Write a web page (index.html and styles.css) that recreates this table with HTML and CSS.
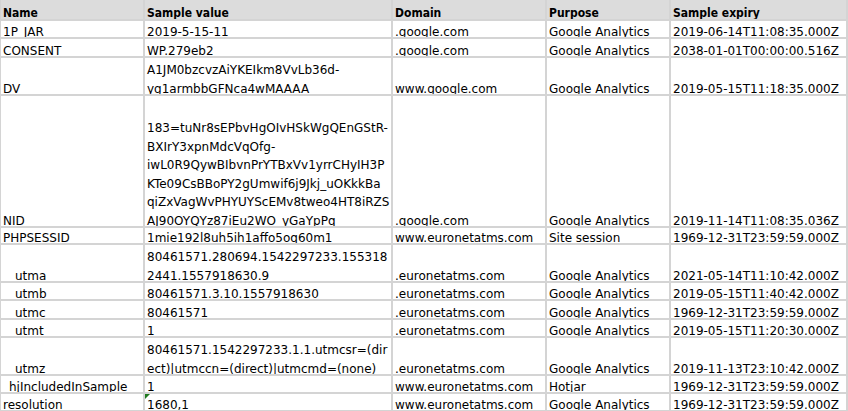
FILE: index.html
```html
<!DOCTYPE html>
<html>
<head>
<meta charset="utf-8">
<link rel="stylesheet" href="styles.css">
</head>
<body>
<div class="sheet">
  <div class="c h"><span>Name</span></div>
  <div class="c h"><span>Sample value</span></div>
  <div class="c h"><span>Domain</span></div>
  <div class="c h"><span>Purpose</span></div>
  <div class="c h"><span>Sample expiry</span></div>

  <div class="c"><span>1P_JAR</span></div>
  <div class="c"><span>2019-5-15-11</span></div>
  <div class="c"><span>.google.com</span></div>
  <div class="c"><span>Google Analytics</span></div>
  <div class="c"><span>2019-06-14T11:08:35.000Z</span></div>

  <div class="c"><span>CONSENT</span></div>
  <div class="c"><span>WP.279eb2</span></div>
  <div class="c"><span>.google.com</span></div>
  <div class="c"><span>Google Analytics</span></div>
  <div class="c"><span>2038-01-01T00:00:00.516Z</span></div>

  <div class="c"><span>DV</span></div>
  <div class="c"><span>A1JM0bzcvzAiYKEIkm8VvLb36d-<br>yg1armbbGFNca4wMAAAA</span></div>
  <div class="c"><span>www.google.com</span></div>
  <div class="c"><span>Google Analytics</span></div>
  <div class="c"><span>2019-05-15T11:18:35.000Z</span></div>

  <div class="c"><span>NID</span></div>
  <div class="c"><span>183=tuNr8sEPbvHgOIvHSkWgQEnGStR-<br>BXIrY3xpnMdcVqOfg-<br>iwL0R9QywBIbvnPrYTBxVv1yrrCHyIH3P<br>KTe09CsBBoPY2gUmwif6j9Jkj_uOKkkBa<br>qiZxVagWvPHYUYScEMv8tweo4HT8iRZS<br>AJ90OYQYz87iEu2WO_yGaYpPq</span></div>
  <div class="c"><span>.google.com</span></div>
  <div class="c"><span>Google Analytics</span></div>
  <div class="c"><span>2019-11-14T11:08:35.036Z</span></div>

  <div class="c"><span>PHPSESSID</span></div>
  <div class="c"><span>1mie192l8uh5ih1affo5oq60m1</span></div>
  <div class="c"><span>www.euronetatms.com</span></div>
  <div class="c"><span>Site session</span></div>
  <div class="c"><span>1969-12-31T23:59:59.000Z</span></div>

  <div class="c"><span>__utma</span></div>
  <div class="c"><span>80461571.280694.1542297233.155318<br>2441.1557918630.9</span></div>
  <div class="c"><span>.euronetatms.com</span></div>
  <div class="c"><span>Google Analytics</span></div>
  <div class="c"><span>2021-05-14T11:10:42.000Z</span></div>

  <div class="c"><span>__utmb</span></div>
  <div class="c"><span>80461571.3.10.1557918630</span></div>
  <div class="c"><span>.euronetatms.com</span></div>
  <div class="c"><span>Google Analytics</span></div>
  <div class="c"><span>2019-05-15T11:40:42.000Z</span></div>

  <div class="c"><span>__utmc</span></div>
  <div class="c"><span>80461571</span></div>
  <div class="c"><span>.euronetatms.com</span></div>
  <div class="c"><span>Google Analytics</span></div>
  <div class="c"><span>1969-12-31T23:59:59.000Z</span></div>

  <div class="c"><span>__utmt</span></div>
  <div class="c"><span>1</span></div>
  <div class="c"><span>.euronetatms.com</span></div>
  <div class="c"><span>Google Analytics</span></div>
  <div class="c"><span>2019-05-15T11:20:30.000Z</span></div>

  <div class="c"><span>__utmz</span></div>
  <div class="c"><span>80461571.1542297233.1.1.utmcsr=(dir<br>ect)|utmccn=(direct)|utmcmd=(none)</span></div>
  <div class="c"><span>.euronetatms.com</span></div>
  <div class="c"><span>Google Analytics</span></div>
  <div class="c"><span>2019-11-13T23:10:42.000Z</span></div>

  <div class="c"><span>_hjIncludedInSample</span></div>
  <div class="c"><span>1</span></div>
  <div class="c"><span>www.euronetatms.com</span></div>
  <div class="c"><span>Hotjar</span></div>
  <div class="c"><span>1969-12-31T23:59:59.000Z</span></div>

  <div class="c"><span>resolution</span></div>
  <div class="c note"><span>1680,1</span></div>
  <div class="c"><span>www.euronetatms.com</span></div>
  <div class="c"><span>Google Analytics</span></div>
  <div class="c"><span>1969-12-31T23:59:59.000Z</span></div>
</div>
</body>
</html>
```

FILE: styles.css
```css
html, body {
  margin: 0;
  padding: 0;
  background: #ffffff;
}

.sheet {
  display: grid;
  grid-template-columns: 142px 246px 152px 122px 175px;
  grid-template-rows: 19px 16px 17px 36px 130px 15px 36px 16px 17px 16px 36px 16px 16px;
  gap: 2px;
  padding: 0 2px 1px 1px;
  width: max-content;
  background: #d4d4d4;
  font-family: "DejaVu Sans", sans-serif;
  font-size: 12px;
  color: #000000;
}

.c {
  background: #ffffff;
  overflow: hidden;
  display: flex;
  align-items: flex-end;
  padding-left: 2px;
  white-space: nowrap;
  position: relative;
}

.c span {
  display: block;
  line-height: 18.6px;
  margin-bottom: -4.5px;
}

.h {
  background: #dcdcdc;
}

.h span {
  font-family: "DejaVu Sans Condensed", "DejaVu Sans", sans-serif;
  font-stretch: condensed;
  font-weight: bold;
  margin-bottom: -4px;
}

.note::before {
  content: "";
  position: absolute;
  left: 0;
  top: 0;
  border-top: 5px solid #1f7a1f;
  border-right: 5px solid transparent;
}
```
